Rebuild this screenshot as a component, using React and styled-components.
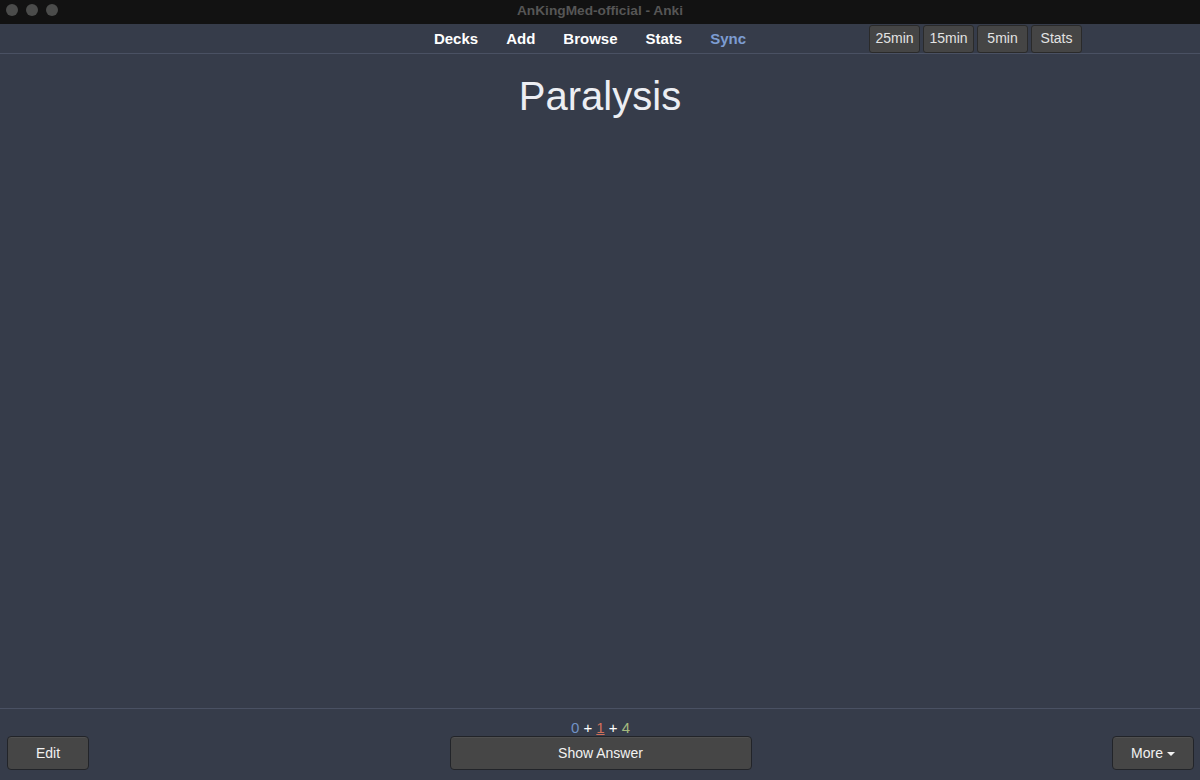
import React from 'react';
import styled, { createGlobalStyle } from 'styled-components';

const GlobalStyle = createGlobalStyle`
  html, body, #root {
    margin: 0;
    padding: 0;
    height: 100%;
  }
  body {
    background: #363c4a;
    font-family: "Liberation Sans", Arial, Helvetica, sans-serif;
    overflow: hidden;
  }
`;

const links = ['Decks', 'Add', 'Browse', 'Stats', 'Sync'];
const timers = ['25min', '15min', '5min', 'Stats'];

export default function App() {
  return (
    <Window>
      <GlobalStyle />
      <TitleBar>
        <Lights>
          <Light />
          <Light />
          <Light />
        </Lights>
        <WindowTitle>AnKingMed-official - Anki</WindowTitle>
      </TitleBar>
      <Toolbar>
        <span />
        <Nav>
          {links.map(l => (
            <NavLink key={l} active={l === 'Sync'}>{l}</NavLink>
          ))}
        </Nav>
        <Timers>
          {timers.map(t => (
            <TimerButton key={t}>{t}</TimerButton>
          ))}
        </Timers>
      </Toolbar>
      <Card>
        <Question>Paralysis</Question>
      </Card>
      <BottomBar>
        <Side>
          <Button width="82px">Edit</Button>
        </Side>
        <Middle>
          <Counts>
            <Count color="#7192c6">0</Count> + <Count color="#d0705a" underline>1</Count> + <Count color="#a4b97e">4</Count>
          </Counts>
          <Button width="302px">Show Answer</Button>
        </Middle>
        <Side right>
          <Button width="82px">
            More <Caret />
          </Button>
        </Side>
      </BottomBar>
    </Window>
  );
}

const Window = styled.div`
  display: flex;
  flex-direction: column;
  height: 780px;
  width: 1200px;
  background: #363c4a;
`;

const TitleBar = styled.div`
  position: relative;
  height: 24px;
  flex-shrink: 0;
  background: #121212;
  display: flex;
  align-items: center;
  justify-content: center;
`;

const Lights = styled.div`
  position: absolute;
  left: 6px;
  top: 4px;
  display: flex;
  gap: 8px;
`;

const Light = styled.div`
  width: 12px;
  height: 12px;
  border-radius: 50%;
  background: #4b4c4b;
`;

const WindowTitle = styled.div`
  margin-top: -4px;
  font-size: 13.7px;
  font-weight: bold;
  color: #565656;
`;

const Toolbar = styled.div`
  box-sizing: border-box;
  height: 30px;
  flex-shrink: 0;
  display: grid;
  grid-template-columns: 1fr auto 1fr;
  padding-right: 20px;
  border-bottom: 1px solid #4a5163;
`;

const Nav = styled.nav`
  display: flex;
  align-items: center;
  gap: 28px;
`;

const NavLink = styled.a`
  font-size: 15px;
  font-weight: bold;
  color: ${p => (p.active ? '#7d9dd2' : '#ffffff')};
  cursor: pointer;
`;

const Timers = styled.div`
  display: flex;
  align-items: flex-start;
  gap: 3px;
  margin-left: 123px;
  padding-top: 1px;
`;

const TimerButton = styled.div`
  box-sizing: border-box;
  width: 51px;
  height: 28px;
  display: flex;
  align-items: center;
  justify-content: center;
  padding-bottom: 3px;
  background: #454545;
  border: 1px solid #2a2a2a;
  border-radius: 3px;
  color: #e2e2e2;
  font-size: 14px;
`;

const Card = styled.main`
  flex: 1;
  display: flex;
  justify-content: center;
  padding-top: 20px;
`;

const Question = styled.h1`
  margin: 0;
  font-size: 40px;
  font-weight: normal;
  color: #eceef3;
  height: 46px;
`;

const BottomBar = styled.div`
  box-sizing: border-box;
  height: 72px;
  flex-shrink: 0;
  border-top: 1px solid #4a5163;
  display: grid;
  grid-template-columns: 1fr auto 1fr;
  align-items: end;
  padding: 0 6px 10px 7px;
`;

const Side = styled.div`
  display: flex;
  justify-content: ${p => (p.right ? 'flex-end' : 'flex-start')};
`;

const Middle = styled.div`
  display: flex;
  flex-direction: column;
  align-items: center;
  gap: 0;
`;

const Counts = styled.div`
  font-size: 15px;
  color: #ffffff;
  line-height: 17px;
`;

const Count = styled.span`
  color: ${p => p.color};
  text-decoration: ${p => (p.underline ? 'underline' : 'none')};
`;

const Button = styled.div`
  box-sizing: border-box;
  width: ${p => p.width};
  height: 34px;
  display: flex;
  align-items: center;
  justify-content: center;
  gap: 4px;
  background: #464646;
  border: 1px solid #222429;
  border-radius: 4px;
  box-shadow: inset 0 1px 0 rgba(255, 255, 255, 0.06);
  color: #f2f2f2;
  font-size: 14px;
`;

const Caret = styled.span`
  width: 0;
  height: 0;
  border-left: 4px solid transparent;
  border-right: 4px solid transparent;
  border-top: 4px solid #f2f2f2;
  margin-top: 1px;
`;
